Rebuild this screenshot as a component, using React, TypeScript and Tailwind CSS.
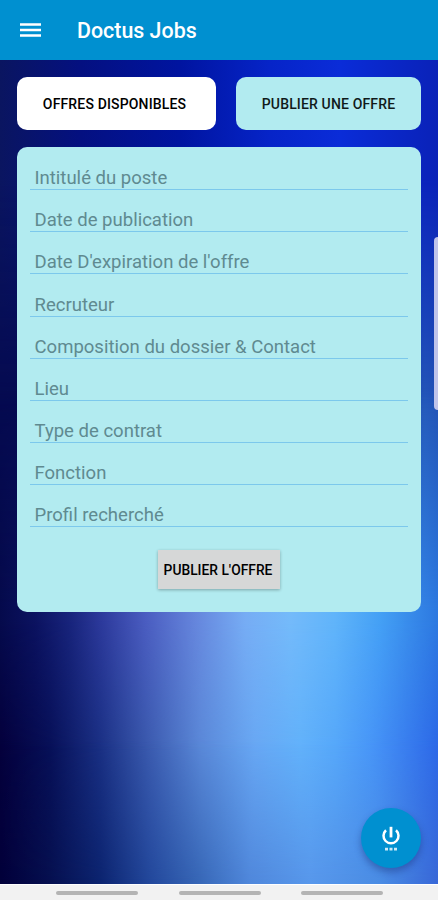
const fields: string[] = [
  "Intitulé du poste",
  "Date de publication",
  "Date D'expiration de l'offre",
  "Recruteur",
  "Composition du dossier & Contact",
  "Lieu",
  "Type de contrat",
  "Fonction",
  "Profil recherché",
];

function Backdrop() {
  return (
    <div className="absolute inset-0 -z-10 bg-[linear-gradient(to_right,#02003a_0px,#061050_50px,#0c2470_100px,#23489c_150px,#3868b8_200px,#5088dc_250px,#5898ec_310px,#4a8ce4_380px,#3868d8_438px)]">
      <div className="absolute inset-0 bg-[linear-gradient(to_right,#04003c_0px,#071058_50px,#1a3084_100px,#3c5cb0_150px,#5a88d8_200px,#68a8f4_255px,#62b2fb_300px,#56a8fa_335px,#4896f8_370px,#2c68e8_438px)] [mask-image:linear-gradient(to_bottom,black_740px,transparent_880px)]" />
      <div className="absolute inset-0 bg-[linear-gradient(to_right,#050a4c_0px,#0b1260_35px,#18247c_70px,#2d3a9c_102px,#4a5cc0_145px,#6585dc_195px,#76acf4_245px,#74bafa_290px,#60b4fa_335px,#44a0f5_380px,#2c78e0_438px)] [mask-image:linear-gradient(to_bottom,black_620px,transparent_750px)]" />
      <div className="absolute inset-0 bg-[linear-gradient(to_right,#050a50_0px,#060b55_300px,#2458b8_425px,#2252b4_438px)] [mask-image:linear-gradient(to_bottom,black_390px,transparent_610px)]" />
      <div className="absolute inset-0 bg-[linear-gradient(to_right,#0a1560_0px,#041080_80px,#0014a0_180px,#0624c8_270px,#0a2cd8_340px,#0a22b8_438px)] [mask-image:linear-gradient(to_bottom,black_180px,transparent_410px)]" />
    </div>
  );
}

function MenuIcon() {
  return (
    <svg viewBox="0 0 21 16" className="h-4 w-[21px]" stroke="white" strokeWidth="2.5">
      <path d="M0 2.4h21M0 8h21M0 13.6h21" />
    </svg>
  );
}

function PowerIcon() {
  return (
    <svg viewBox="0 0 24 28" className="h-7 w-6" fill="none" stroke="white">
      <path d="M12 2.8v10.6" strokeWidth="2.8" />
      <path d="M7 6.2a7.5 7.5 0 1 0 10 0" strokeWidth="2.5" />
      <path d="M6 25.2h3M10.5 25.2h3M15 25.2h3" strokeWidth="2.8" strokeOpacity="0.8" />
    </svg>
  );
}

export default function App() {
  return (
    <div className="relative isolate flex h-[900px] w-full flex-col overflow-hidden font-[Roboto,sans-serif]">
      <Backdrop />
      <header className="flex h-[60px] shrink-0 items-center bg-[#0090d0] pl-5 pt-[2px]">
        <div className="w-[57px] pb-[2px]">
          <MenuIcon />
        </div>
        <h1 className="pt-px text-[21.4px] font-medium text-white">Doctus Jobs</h1>
      </header>

      <main className="flex-1 px-[17px] pt-[17px]">
        <div className="flex gap-5">
          <button className="h-[53px] w-[199px] rounded-[10px] bg-white pt-0.5 pr-[4px] text-[14px] font-medium tracking-[0.15px] text-black">
            OFFRES DISPONIBLES
          </button>
          <button className="h-[53px] w-[185px] rounded-[10px] bg-[#b2ebf0] pt-0.5 text-[14px] font-medium tracking-[0.15px] text-[#101a1a]">
            PUBLIER UNE OFFRE
          </button>
        </div>
        <form className="mt-[17px] flex h-[465px] w-[404px] flex-col items-center rounded-[10px] bg-[#b2ebf0] px-[13px] pt-[0.8px]">
          {fields.map((label) => (
            <div
              key={label}
              className="flex h-[42.2px] w-full shrink-0 items-end border-b-[1.5px] border-[#7cc8ec] pb-px pl-[4.5px] text-[18.55px] leading-[20px] text-[#5f8a90]"
            >
              {label}
            </div>
          ))}
          <button
            type="button"
            className="mt-[22.5px] h-[39px] w-[122px] shrink-0 bg-[#d6d7d7] pt-px pr-[2px] text-[13.8px] font-medium text-black shadow-[0_1px_3px_rgba(0,0,0,0.3)]"
          >
            PUBLIER L'OFFRE
          </button>
        </form>
      </main>

      <div className="absolute top-[237px] right-0 h-[173px] w-[4px] rounded-l-[4px] bg-[#c0c4ea]" />
      <button className="absolute top-[808px] left-[361px] flex size-[60px] items-center justify-center rounded-full bg-[#0090d0] shadow-[0_4px_7px_rgba(20,40,110,0.4)]">
        <PowerIcon />
      </button>

      <nav className="flex h-[16px] shrink-0 gap-[40.5px] border-t border-white bg-[#f2f2f2] pt-[6px] pl-[56px]">
        <span className="h-[4px] w-[82px] rounded-full bg-[#b4b4b4]" />
        <span className="h-[4px] w-[82px] rounded-full bg-[#b4b4b4]" />
        <span className="h-[4px] w-[82px] rounded-full bg-[#b4b4b4]" />
      </nav>
    </div>
  );
}
